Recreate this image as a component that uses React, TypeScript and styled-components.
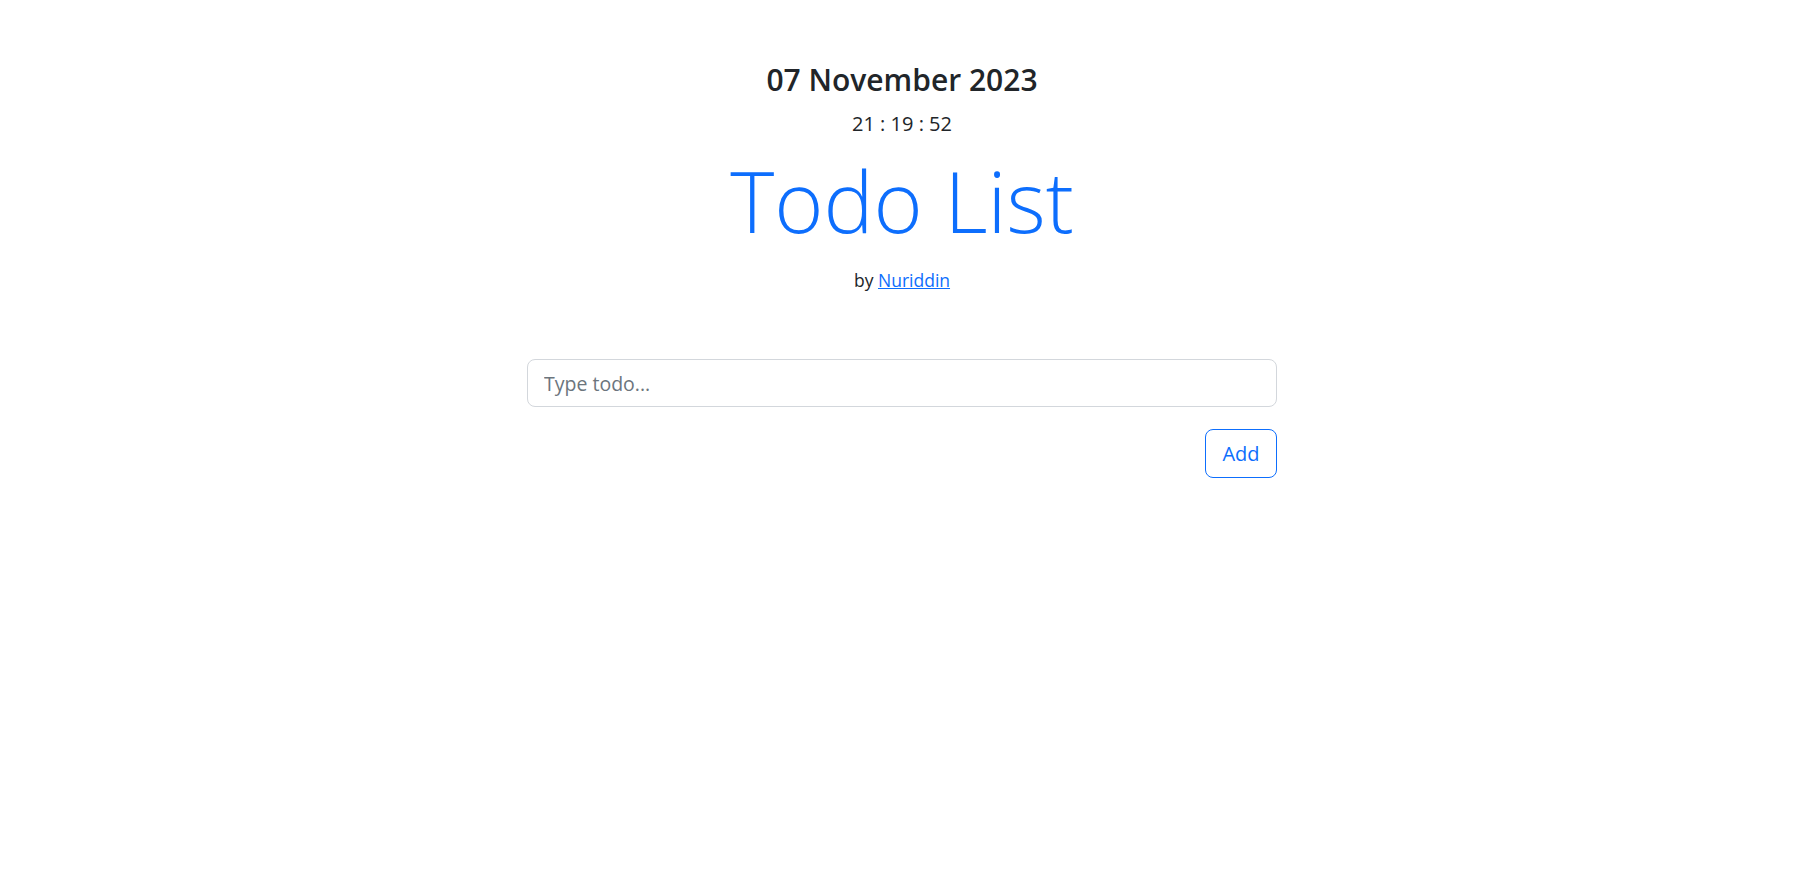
import React from "react";
import styled, { createGlobalStyle } from "styled-components";

const GlobalStyle = createGlobalStyle`
  html, body { margin: 0; padding: 0; background: #fff; }
  body {
    font-family: "Open Sans", "Noto Sans", sans-serif;
    color: #212529;
    -webkit-font-smoothing: antialiased;
  }
  * { box-sizing: border-box; }
`;

const Page = styled.main`
  display: flex;
  justify-content: center;
  padding: 62px 15px 0 0;
`;

const Column = styled.div`
  width: 750px;
  display: flex;
  flex-direction: column;
  align-items: center;
  text-align: center;
`;

const DateTitle = styled.h2`
  margin: 0;
  font-size: 30px;
  font-weight: 600;
  line-height: 36px;
  color: #212529;
`;

const Clock = styled.div`
  margin-top: 11px;
  font-size: 20px;
  line-height: 30px;
`;

const Title = styled.h1`
  margin: 10px 0 0;
  font-size: 84px;
  font-weight: 300;
  line-height: 103px;
  color: #0d6efd;
`;

const Byline = styled.p`
  margin: 16px 0 0;
  font-size: 17.5px;
  line-height: 25px;
`;

const AuthorLink = styled.a`
  color: #0d6efd;
  text-decoration: underline;
`;

const Form = styled.form`
  width: 100%;
  margin-top: 66px;
  display: flex;
  flex-direction: column;
  align-items: flex-end;
  gap: 22px;
`;

const Input = styled.input`
  width: 100%;
  height: 48px;
  padding: 8px 16px;
  font-family: inherit;
  font-size: 19.5px;
  color: #212529;
  background: #fff;
  border: 1px solid #d3d7dc;
  border-radius: 8px;
  outline: none;
  &::placeholder { color: #6c757d; opacity: 1; }
`;

const AddButton = styled.button`
  height: 49px;
  width: 72px;
  padding: 0;
  font-family: inherit;
  font-size: 20px;
  color: #0d6efd;
  background: #fff;
  border: 1px solid #0d6efd;
  border-radius: 8px;
  cursor: pointer;
`;

export default function App() {
  return (
    <>
      <GlobalStyle />
      <Page>
        <Column>
          <DateTitle>07 November 2023</DateTitle>
          <Clock>21 : 19 : 52</Clock>
          <Title>Todo List</Title>
          <Byline>
            by <AuthorLink href="#">Nuriddin</AuthorLink>
          </Byline>
          <Form onSubmit={(e) => e.preventDefault()}>
            <Input type="text" placeholder="Type todo..." />
            <AddButton type="submit">Add</AddButton>
          </Form>
        </Column>
      </Page>
    </>
  );
}
